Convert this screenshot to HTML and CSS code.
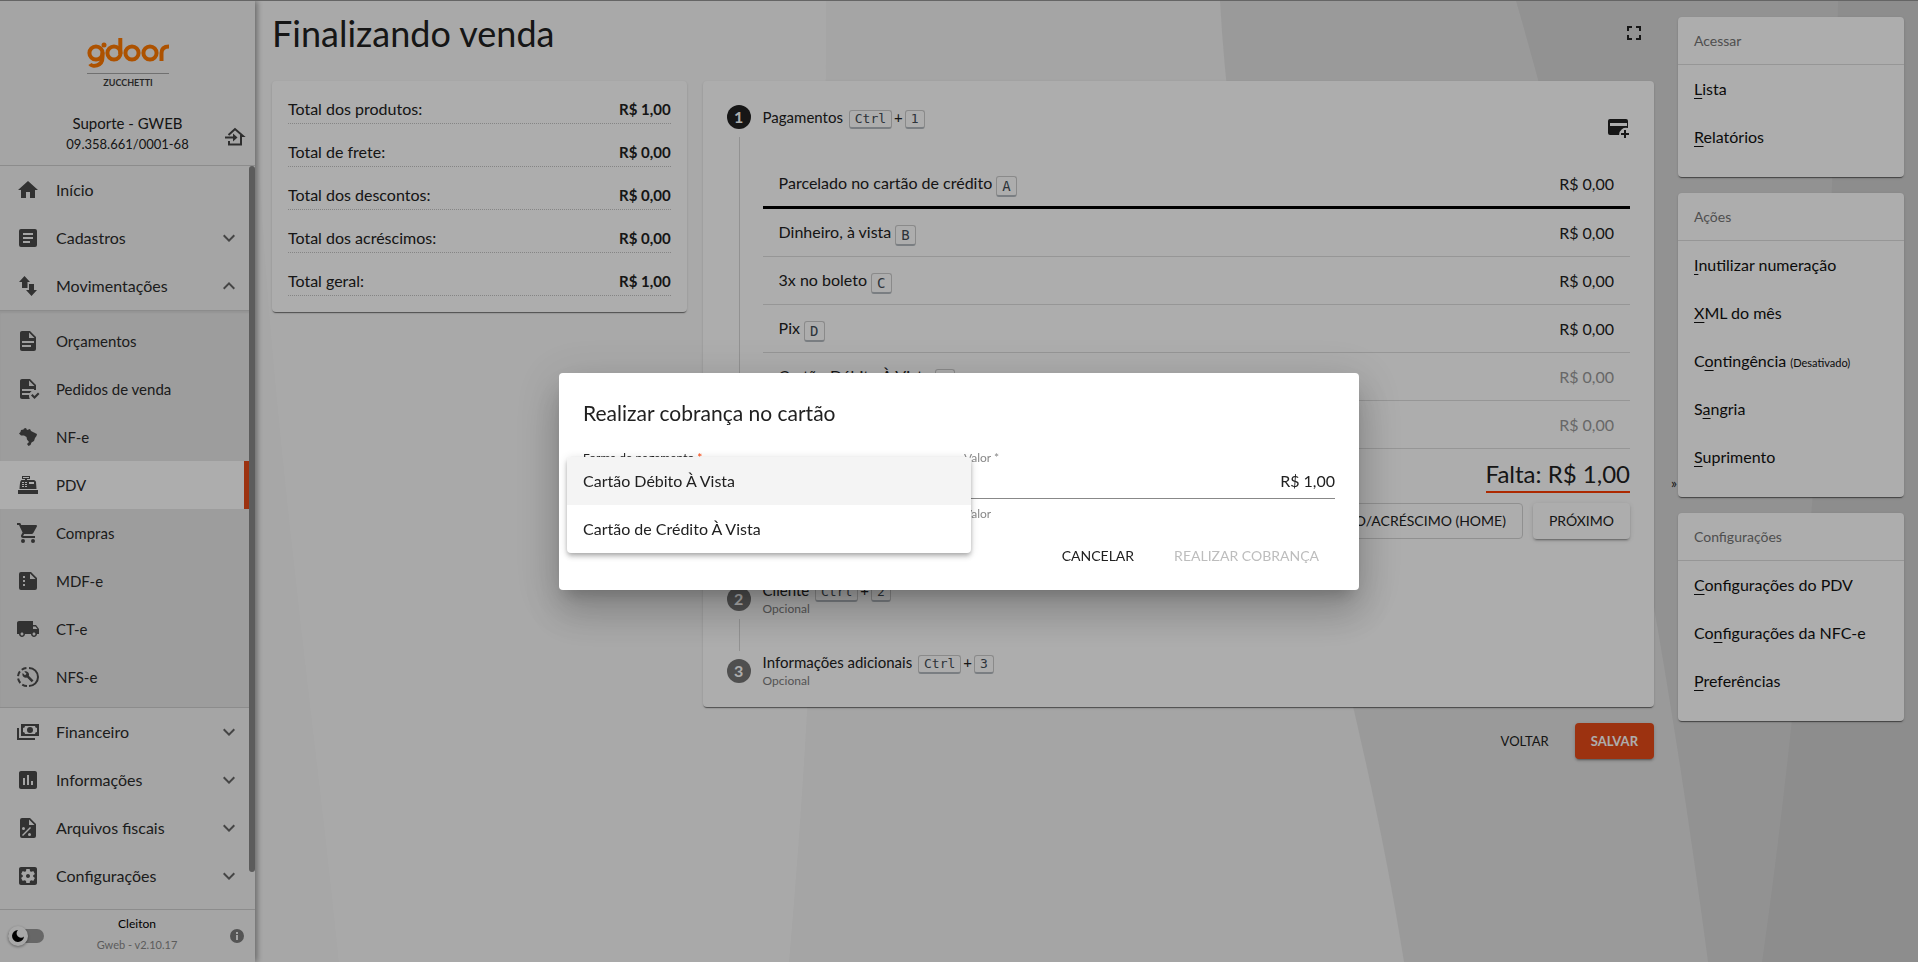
FILE: index.html
```html
<!DOCTYPE html>
<html lang="pt-BR">
<head>
<meta charset="utf-8">
<title>Finalizando venda</title>
<link rel="stylesheet" href="styles.css">
</head>
<body>
<div class="app">
  <svg class="backdrop-art" viewBox="0 0 1918 962" preserveAspectRatio="none" aria-hidden="true">
    <rect width="1918" height="962" fill="#fafafa"/>
    <path d="M256 100C268 400 315 720 339 962H256Z" fill="#f7f7f7"/>
    <path d="M826 0C826 380 812 700 789 962H1918V0Z" fill="#f3f3f3"/>
    <path d="M1220 0C1238 330 1352 630 1404 962H1918V0Z" fill="#e4e4e4"/>
    <path d="M1516 0C1600 290 1660 600 1708 962H1918V0Z" fill="#d8d8d8"/>
    <path d="M1838 0C1832 300 1805 660 1762 962H1918V0Z" fill="#d0d0d0"/>
  </svg>

  <aside class="sidebar">
    <header class="brand">
      <svg class="logo" viewBox="0 0 82 50" role="img" aria-label="gdoor Zucchetti">
        <g fill="none" stroke="#ff7900" stroke-width="4">
          <circle cx="9" cy="16" r="6.600"/><path d="M15.500 15.500V20C15.500 30 5 30 3 27"/>
          <circle cx="27" cy="16" r="6.600"/><path d="M33.300 1V17"/>
          <circle cx="45" cy="16" r="6.600"/><circle cx="63" cy="16" r="6.600"/>
          <path d="M74.500 24V16C74.500 11.500 77 9.500 82 9.500"/>
        </g>
        <circle cx="17" cy="8" r="2.500" fill="#ff7900"/>
        <path d="M0 36.500H82" stroke="#a5a5a5"/>
        <text class="logo-sub" x="41" y="49" text-anchor="middle">ZUCCHETTI</text>
      </svg>
      <div class="company">
        <strong class="company-name">Suporte - GWEB</strong>
        <span class="company-id">09.358.661/0001-68</span>
      </div>
      <button class="icon-btn leave" aria-label="Trocar empresa">
        <svg class="icon" viewBox="0 0 24 24"><path d="M5.500 10 12 4 20 11H18V19.500H6V16" fill="none" stroke="currentColor" stroke-width="2"/><path d="M2 13.500V11.500H10V8.500L14.500 12.500 10 16.500V13.500Z"/></svg>
      </button>
    </header>

    <nav class="menu">
      <a class="item" href="#"><svg class="icon" viewBox="0 0 24 24"><path d="M10,20V14H14V20H19V12H22L12,3L2,12H5V20H10Z"/></svg><span>Início</span></a>
      <a class="item" href="#"><svg class="icon" viewBox="0 0 24 24"><path fill-rule="evenodd" d="M19,3H5A2,2 0 0,0 3,5V19A2,2 0 0,0 5,21H19A2,2 0 0,0 21,19V5A2,2 0 0,0 19,3M14,17H7V15H14V17M17,13H7V11H17V13M17,9H7V7H17V9Z"/></svg><span>Cadastros</span><svg class="icon chev" viewBox="0 0 24 24"><path d="M7.410,8.580L12,13.170L16.590,8.580L18,10L12,16L6,10Z"/></svg></a>
      <a class="item" href="#"><svg class="icon" viewBox="0 0 24 24"><path d="M8.500 2 14 8H11.500V14H6V8H3ZM13 10H18V16H21L15.500 22 10 16H13Z"/></svg><span>Movimentações</span><svg class="icon chev up" viewBox="0 0 24 24"><path d="M7.410,8.580L12,13.170L16.590,8.580L18,10L12,16L6,10Z"/></svg></a>
      <div class="submenu">
        <a class="item" href="#"><svg class="icon" viewBox="0 0 24 24"><path d="M13,9H18.500L13,3.500V9M6,2H14L20,8V20A2,2 0 0,1 18,22H6C4.890,22 4,21.100 4,20V4C4,2.890 4.890,2 6,2M15,18V16H6V18H15M18,14V12H6V14H18Z"/></svg><span>Orçamentos</span></a>
        <a class="item" href="#"><svg class="icon" viewBox="0 0 24 24"><path d="M23.500 17L18.500 22L15 18.500L16.500 17L18.500 19L22 15.500L23.500 17M6 2C4.890 2 4 2.890 4 4V20C4 21.110 4.890 22 6 22H13.810C13.280 21.090 13 20.050 13 19C13 18.670 13.030 18.330 13.080 18H6V16H13.810C14.270 15.200 14.910 14.500 15.680 14H6V12H18V13.080C18.330 13.030 18.670 13 19 13S19.670 13.030 20 13.080V8L14 2M13 3.500L18.500 9H13Z"/></svg><span>Pedidos de venda</span></a>
        <a class="item" href="#"><svg class="icon" viewBox="0 0 24 24"><path d="M5 5 7.500 4.500 8 3.500 10 3 11 5 14 4 15 6 18 7.500 21 9 20.500 11 19 13 18 16 15.500 17.500 14.500 20 12.500 21 11 19 13 17 11 14.500 10.500 12 8 10.500 5 10.500 3 8.500 4.500 7Z"/></svg><span>NF-e</span></a>
        <a class="item active" href="#"><svg class="icon" viewBox="0 0 24 24"><path d="M2,17H22V21H2V17M6.250,7H9V6H6V3H14V6H11V7H17.800C18.800,7 19.800,8 20,9L20.500,16H3.500C4.050,9 4.170,7 6.250,7M13,9V11H18V9H13M6,9V10H8V9H6M9,9V10H11V9H9M6,11V12H8V11H6M9,11V12H11V11H9M6,13V14H8V13H6M9,13V14H11V13H9M7,4V5H13V4H7Z"/></svg><span>PDV</span></a>
        <a class="item" href="#"><svg class="icon" viewBox="0 0 24 24"><path d="M17,18A2,2 0 1,1 17,22A2,2 0 1,1 17,18M1,2H4.270L5.210,4H20A1,1 0 0,1 21,5C21,5.170 20.950,5.340 20.880,5.500L17.300,11.970C16.960,12.580 16.300,13 15.550,13H8.100L7.200,14.630L7.170,14.750A0.250,0.250 0 0,0 7.420,15H19V17H7C5.890,17 5,16.100 5,15C5,14.650 5.090,14.320 5.240,14.040L6.600,11.590L3,4H1V2M7,18A2,2 0 1,1 7,22A2,2 0 1,1 7,18Z"/></svg><span>Compras</span></a>
        <a class="item" href="#"><svg class="icon" viewBox="0 0 24 24"><path fill-rule="evenodd" d="M15 3H5A2 2 0 0 0 3 5V19A2 2 0 0 0 5 21H19A2 2 0 0 0 21 19V9ZM7 7H9V9H7ZM7 11H9V13H7ZM7 15H9V17H7ZM14 4.500 19.500 10H14Z"/></svg><span>MDF-e</span></a>
        <a class="item" href="#"><svg class="icon" viewBox="0 0 24 24"><path d="M20 8h-3V4H3c-1.100 0-2 .9-2 2v11h2c0 1.660 1.340 3 3 3s3-1.340 3-3h6c0 1.660 1.340 3 3 3s3-1.340 3-3h2v-5l-3-4zM6 18.500c-.83 0-1.500-.67-1.500-1.500s.67-1.500 1.500-1.500 1.500.67 1.500 1.500-.67 1.500-1.500 1.500zm13.500-9l1.960 2.500H17V9.500h2.500zm-1.500 9c-.83 0-1.500-.67-1.500-1.500s.67-1.500 1.500-1.500 1.500.67 1.500 1.500-.67 1.500-1.500 1.500z"/></svg><span>CT-e</span></a>
        <a class="item" href="#"><svg class="icon" viewBox="0 0 24 24"><path d="M13 3A9 9 0 0 1 13 21" fill="none" stroke="currentColor" stroke-width="2"/><path d="M11 21A9 9 0 0 1 11 3" fill="none" stroke="currentColor" stroke-width="2" stroke-dasharray="5 2.500"/><path d="M17.500 15.500 12.800 10.800C13.300 9.600 13 8.200 12 7.200 11 6.200 9.500 6 8.300 6.500L10.500 8.700 9 10.200 6.700 8C6.100 9.300 6.400 10.800 7.400 11.800 8.400 12.700 9.800 13 11 12.500L15.700 17.300Z"/></svg><span>NFS-e</span></a>
      </div>
      <a class="item" href="#"><svg class="icon" viewBox="0 0 24 24"><path fill-rule="evenodd" d="M5,4H23V16H5V4M9,6A2,2 0 0,1 7,8V12A2,2 0 0,1 9,14H19A2,2 0 0,1 21,12V8A2,2 0 0,1 19,6H9M14,7A3,3 0 1,1 14,13A3,3 0 1,1 14,7M1,8H3V18H19V20H1V8Z"/></svg><span>Financeiro</span><svg class="icon chev" viewBox="0 0 24 24"><path d="M7.410,8.580L12,13.170L16.590,8.580L18,10L12,16L6,10Z"/></svg></a>
      <a class="item" href="#"><svg class="icon" viewBox="0 0 24 24"><path d="M19 3H5c-1.100 0-2 .9-2 2v14c0 1.100.9 2 2 2h14c1.100 0 2-.9 2-2V5c0-1.100-.9-2-2-2zM9 17H7v-7h2v7zm4 0h-2V7h2v10zm4 0h-2v-4h2v4z"/></svg><span>Informações</span><svg class="icon chev" viewBox="0 0 24 24"><path d="M7.410,8.580L12,13.170L16.590,8.580L18,10L12,16L6,10Z"/></svg></a>
      <a class="item" href="#"><svg class="icon" viewBox="0 0 24 24"><path fill-rule="evenodd" d="M14,2L20,8V20A2,2 0 0,1 18,22H6A2,2 0 0,1 4,20V4A2,2 0 0,1 6,2ZM13 3.500V9H18.500ZM7.500 11A1.500 1.500 0 1 0 7.500 14 1.500 1.500 0 1 0 7.500 11M13.500 17A1.500 1.500 0 1 0 13.500 20 1.500 1.500 0 1 0 13.500 17M14 11 6 19 7 20 15 12Z"/></svg><span>Arquivos fiscais</span><svg class="icon chev" viewBox="0 0 24 24"><path d="M7.410,8.580L12,13.170L16.590,8.580L18,10L12,16L6,10Z"/></svg></a>
      <a class="item" href="#"><svg class="icon" viewBox="0 0 24 24"><path d="M12 10c-1.100 0-2 .9-2 2s.9 2 2 2 2-.9 2-2-.9-2-2-2zm7-7H5c-1.110 0-2 .9-2 2v14c0 1.100.89 2 2 2h14c1.110 0 2-.9 2-2V5c0-1.100-.89-2-2-2zm-1.750 9c0 .23-.02.46-.05.68l1.480 1.160c.13.11.17.3.08.45l-1.400 2.420c-.09.15-.27.21-.43.15l-1.740-.7c-.36.28-.76.51-1.180.69l-.26 1.850c-.03.17-.18.3-.35.3h-2.800c-.17 0-.32-.13-.35-.29l-.26-1.850c-.43-.18-.82-.41-1.180-.69l-1.740.7c-.16.06-.34 0-.43-.15l-1.400-2.420c-.09-.15-.05-.34.08-.45l1.480-1.160c-.03-.23-.05-.46-.05-.69 0-.23.02-.46.05-.68l-1.480-1.160c-.13-.11-.17-.3-.08-.45l1.400-2.420c.09-.15.27-.21.43-.15l1.740.7c.36-.28.76-.51 1.180-.69l.26-1.850c.03-.17.18-.3.35-.3h2.800c.17 0 .32.13.35.29l.26 1.850c.43.18.82.41 1.180.69l1.740-.7c.16-.06.34 0 .43.15l1.400 2.420c.09.15.05.34-.08.45l-1.480 1.160c.03.23.05.46.05.69z"/></svg><span>Configurações</span><svg class="icon chev" viewBox="0 0 24 24"><path d="M7.410,8.580L12,13.170L16.590,8.580L18,10L12,16L6,10Z"/></svg></a>
      <span class="scroll-thumb"></span>
    </nav>

    <footer class="side-foot">
      <button class="theme" role="switch" aria-checked="false" aria-label="Tema escuro"><span class="knob"><svg viewBox="0 0 14 14"><path d="M7 1A6 6 0 1 0 13 7.500 4 4 0 0 1 7 1Z"/></svg></span></button>
      <div class="who"><span class="user">Cleiton</span><span class="version">Gweb - v2.10.17</span></div>
      <svg class="info" viewBox="0 0 14 14" role="img" aria-label="Informações"><path fill-rule="evenodd" d="M7 0A7 7 0 1 0 7 14 7 7 0 1 0 7 0M6 3H8V5H6ZM6 6H8V11H6Z"/></svg>
    </footer>
  </aside>

  <main class="main">
    <div class="title-row">
      <h1>Finalizando venda</h1>
      <button class="icon-btn" aria-label="Tela cheia"><svg class="icon" viewBox="0 0 24 24"><path d="M5,5H10V7H7V10H5V5M14,5H19V10H17V7H14V5M17,14H19V19H14V17H17V14M10,17V19H5V14H7V17H10Z"/></svg></button>
    </div>
    <div class="columns">
      <dl class="card totals">
        <div class="total"><dt>Total dos produtos:</dt><dd>R$ 1,00</dd></div>
        <div class="total"><dt>Total de frete:</dt><dd>R$ 0,00</dd></div>
        <div class="total"><dt>Total dos descontos:</dt><dd>R$ 0,00</dd></div>
        <div class="total"><dt>Total dos acréscimos:</dt><dd>R$ 0,00</dd></div>
        <div class="total"><dt>Total geral:</dt><dd>R$ 1,00</dd></div>
      </dl>
      <div class="checkout">
        <section class="card steps">
          <div class="step">
            <div class="step-head first">
              <span class="num current">1</span>
              <div class="step-label">Pagamentos <kbd>Ctrl</kbd>+<kbd>1</kbd></div>
              <button class="icon-btn" aria-label="Adicionar pagamento"><svg class="icon" viewBox="0 0 24 24"><path fill-rule="evenodd" d="M4 4H20A2 2 0 0 1 22 6V13.100A7 7 0 0 0 13.100 20H4A2 2 0 0 1 2 18V6A2 2 0 0 1 4 4ZM4 8V11H21V8ZM18 15H20V18H23V20H20V23H18V20H15V18H18Z"/></svg></button>
            </div>
            <div class="step-body">
              <ul class="payments">
                <li class="focused"><span>Parcelado no cartão de crédito <kbd>A</kbd></span><span class="amount">R$ 0,00</span></li>
                <li><span>Dinheiro, à vista <kbd>B</kbd></span><span class="amount">R$ 0,00</span></li>
                <li><span>3x no boleto <kbd>C</kbd></span><span class="amount">R$ 0,00</span></li>
                <li><span>Pix <kbd>D</kbd></span><span class="amount">R$ 0,00</span></li>
                <li><span>Cartão Débito À Vista <kbd>E</kbd></span><span class="amount off">R$ 0,00</span></li>
                <li><span>Cartão de Crédito À Vista <kbd>F</kbd></span><span class="amount off">R$ 0,00</span></li>
              </ul>
              <p class="missing"><span>Falta: R$ 1,00</span></p>
              <div class="step-actions">
                <button class="btn outlined">DESCONTO/ACRÉSCIMO (HOME)</button>
                <button class="btn raised">PRÓXIMO</button>
              </div>
            </div>
          </div>
          <div class="step">
            <div class="step-head">
              <span class="num">2</span>
              <div class="step-label">Cliente <kbd>Ctrl</kbd>+<kbd>2</kbd><small>Opcional</small></div>
            </div>
          </div>
          <div class="step">
            <div class="step-head">
              <span class="num">3</span>
              <div class="step-label">Informações adicionais <kbd>Ctrl</kbd>+<kbd>3</kbd><small>Opcional</small></div>
            </div>
          </div>
        </section>
        <div class="page-actions">
          <button class="btn">VOLTAR</button>
          <button class="btn primary">SALVAR</button>
        </div>
      </div>
    </div>
  </main>

  <aside class="side-panel">
    <button class="collapse" aria-label="Recolher painel">»</button>
    <section class="card group">
      <h2>Acessar</h2>
      <a href="#"><u>L</u>ista</a>
      <a href="#"><u>R</u>elatórios</a>
    </section>
    <section class="card group">
      <h2>Ações</h2>
      <a href="#"><u>I</u>nutilizar numeração</a>
      <a href="#"><u>X</u>ML do mês</a>
      <a href="#">C<u>o</u>ntingência <small>(Desativado)</small></a>
      <a href="#">S<u>a</u>ngria</a>
      <a href="#"><u>S</u>uprimento</a>
    </section>
    <section class="card group">
      <h2>Configurações</h2>
      <a href="#"><u>C</u>onfigurações do PDV</a>
      <a href="#">Co<u>n</u>figurações da NFC-e</a>
      <a href="#"><u>P</u>referências</a>
    </section>
  </aside>
</div>

<div class="overlay">
  <form class="dialog" role="dialog" aria-labelledby="dlg-title">
    <h2 id="dlg-title">Realizar cobrança no cartão</h2>
    <div class="fields">
      <div class="field">
        <label for="method">Forma de pagamento <span class="req">*</span></label>
        <select id="method"><option></option><option>Cartão Débito À Vista</option><option>Cartão de Crédito À Vista</option></select>
        <ul class="options" role="listbox" aria-label="Forma de pagamento">
          <li class="hover" role="option">Cartão Débito À Vista</li>
          <li role="option">Cartão de Crédito À Vista</li>
        </ul>
      </div>
      <div class="field muted">
        <label for="value">Valor *</label>
        <input id="value" type="text" value="R$ 1,00">
        <span class="hint">Valor</span>
      </div>
    </div>
    <div class="dialog-actions">
      <button type="button" class="btn">CANCELAR</button>
      <button type="button" class="btn" disabled>REALIZAR COBRANÇA</button>
    </div>
  </form>
</div>
</body>
</html>
```
FILE: styles.css
```css
* { box-sizing: border-box; }

body {
  margin: 0;
  font-family: Lato, "Open Sans", sans-serif;
  font-size: 16px;
  line-height: 24px;
  color: #212121;
}

h1, h2, p, ul, dl, dd { margin: 0; padding: 0; font-weight: 400; }
ul { list-style: none; }
a { color: inherit; text-decoration: none; }
button, input, select { font: inherit; color: inherit; }

.app {
  position: relative;
  display: flex;
  height: 100vh;
  overflow: hidden;
  border-top: 1px solid #969696;
}

.backdrop-art {
  position: absolute;
  inset: 0;
  z-index: -1;
  width: 100%;
  height: 100%;
}

.icon {
  flex: none;
  display: block;
  width: 24px;
  height: 24px;
  fill: currentColor;
}

.icon-btn {
  padding: 0;
  border: 0;
  background: none;
  cursor: pointer;
}

.card {
  border-radius: 4px;
  background: #fff;
  box-shadow: 0 2px 1px -1px rgba(0, 0, 0, .4), 0 1px 1px rgba(0, 0, 0, .14), 0 1px 3px rgba(0, 0, 0, .12);
}

/* Sidebar */
.sidebar {
  flex: none;
  display: flex;
  flex-direction: column;
  width: 255px;
  background: #f4f4f4;
  box-shadow: 2px 0 6px rgba(0, 0, 0, .4);
}

.brand {
  position: relative;
  display: flex;
  flex-direction: column;
  align-items: center;
  gap: 26px;
  padding: 36px 0 10px;
  border-bottom: 1px solid #cfcfcf;
}

.logo { width: 82px; height: 50px; }
.logo-sub { font-size: 9px; font-weight: 700; fill: #3b3b3b; }

.company {
  display: flex;
  flex-direction: column;
  align-items: center;
  line-height: 21px;
}

.company-name { font-size: 15px; font-weight: 400; }
.company-id { font-size: 13px; }
.leave { position: absolute; right: 8px; bottom: 16px; color: #444; }

.menu {
  position: relative;
  flex: 1;
  min-height: 0;
}

.item {
  display: flex;
  align-items: center;
  gap: 16px;
  height: 48px;
  padding: 0 14px 0 16px;
  color: #2b2b2b;
}

.item .icon { color: #4a4a4a; }
.item .chev { margin-left: auto; color: #666; }
.up { transform: rotate(180deg); }

.submenu {
  padding: 6px 0;
  border-top: 1px solid #cfcfcf;
  border-bottom: 1px solid #cfcfcf;
  background: #e8e8e8;
  font-size: 15px;
  box-shadow: inset 0 2px 2px rgba(0, 0, 0, .06);
}

.active {
  margin-right: 6px;
  border-right: 5px solid #e64a19;
  background: #fff;
}

.scroll-thumb {
  position: absolute;
  top: 0;
  right: 0;
  width: 6px;
  height: 95%;
  border-radius: 3px;
  background: #888;
}

.side-foot {
  display: flex;
  align-items: center;
  justify-content: space-between;
  height: 53px;
  padding: 0 11px 0 8px;
  border-top: 1px solid #cfcfcf;
}

.theme {
  width: 36px;
  height: 14px;
  padding: 0;
  border: 0;
  border-radius: 7px;
  background: #999;
}

.knob {
  display: flex;
  align-items: center;
  justify-content: center;
  width: 20px;
  height: 20px;
  margin-top: -3px;
  border-radius: 50%;
  background: #f8f8f8;
  box-shadow: 0 1px 3px rgba(0, 0, 0, .4);
}

.knob svg { width: 14px; height: 14px; }

.who {
  display: flex;
  flex-direction: column;
  align-items: center;
  gap: 1px;
  padding-bottom: 4px;
  font-size: 12px;
  line-height: 20px;
}

.user { color: #000; }
.version { font-size: 11px; color: #888; }
.info { width: 14px; height: 14px; fill: #7d7d7d; }

/* Main content */
.main {
  flex: 1;
  min-width: 0;
  padding: 8px 16px 16px 17px;
}

.title-row {
  display: flex;
  align-items: center;
  justify-content: space-between;
  height: 48px;
  padding-right: 8px;
}

h1 { font-size: 36px; line-height: 48px; }

.columns {
  display: grid;
  grid-template-columns: 30% 1fr;
  align-items: start;
  gap: 16px;
  padding-top: 24px;
}

.totals {
  display: flex;
  flex-direction: column;
  gap: 16px;
  padding: 16px;
}

.total {
  display: flex;
  justify-content: space-between;
  height: 27px;
  border-bottom: 1px dotted #c4c4c4;
}

.total dd { font-size: 15px; font-weight: 700; }

.step { position: relative; }

.step:not(:last-child)::before {
  content: "";
  position: absolute;
  top: 56px;
  bottom: -16px;
  left: 36px;
  border-left: 1px solid #d8d8d8;
}

.step-head {
  display: flex;
  align-items: center;
  gap: 12px;
  height: 72px;
  padding: 0 24px;
}

.first { align-items: flex-start; padding-top: 24px; }
.first .icon-btn { padding-top: 10px; margin-left: auto; }

.num {
  flex: none;
  width: 24px;
  border-radius: 50%;
  background: #757575;
  color: #fff;
  font-weight: 700;
  text-align: center;
}

.current { background: #212121; }
.step-label { padding-bottom: 4px; font-size: 15px; }
.step-label small { display: block; font-size: 12px; line-height: 14px; color: #7c7c7c; }

kbd {
  display: inline-block;
  margin: 0 2px;
  padding: 0 5px;
  border: 1px solid #ccc;
  border-bottom: 2px solid #b4bac0;
  border-radius: 3px;
  color: #444d56;
  font: 13px/16px "DejaVu Sans Mono", monospace;
}

.payments kbd { margin: 0; font-size: 14px; line-height: 18px; vertical-align: -2px; }

.step-body { padding: 8px 24px 24px 60px; }

.payments li {
  display: flex;
  align-items: center;
  justify-content: space-between;
  height: 48px;
  padding: 0 16px;
  border-bottom: 1px solid #ddd;
}

.payments .focused { border-bottom: 3px solid #000; }
.off { color: #999; }

.missing {
  display: flex;
  justify-content: flex-end;
  padding-top: 8px;
  font-size: 24px;
  line-height: 34px;
}

.missing span { border-bottom: 2px solid #ff3d00; }

.step-actions {
  display: flex;
  justify-content: flex-end;
  gap: 10px;
  padding-top: 10px;
}

.btn {
  height: 36px;
  padding: 0 16px;
  border: 0;
  border-radius: 4px;
  background: none;
  font-size: 14px;
  cursor: pointer;
}

.outlined { border: 1px solid #d5d5d5; }

.raised, .primary {
  background: #fff;
  box-shadow: 0 3px 1px -2px rgba(0, 0, 0, .2), 0 2px 2px rgba(0, 0, 0, .14), 0 1px 5px rgba(0, 0, 0, .12);
}

.primary { background: #e64a19; color: #fff; font-weight: 700; }
.btn:disabled { color: #bdbdbd; }

.page-actions {
  display: flex;
  justify-content: flex-end;
  gap: 10px;
  padding-top: 16px;
}

.page-actions .btn { font-size: 13px; }

/* Right panel */
.side-panel {
  position: relative;
  flex: none;
  display: flex;
  flex-direction: column;
  gap: 16px;
  width: 248px;
  padding: 16px 14px 16px 8px;
}

.collapse {
  position: absolute;
  top: 470px;
  left: 1px;
  padding: 0;
  border: 0;
  background: none;
  font-size: 14px;
}

.group { padding-bottom: 16px; }

.group h2 {
  padding: 0 16px;
  border-bottom: 1px solid #ddd;
  font-size: 14px;
  line-height: 47px;
  color: #757575;
}

.group a { display: block; height: 48px; padding: 0 16px; line-height: 48px; color: #111; }
.group small { font-size: 11px; }
.group u { text-underline-offset: 3px; }

/* Dialog */
.overlay {
  position: fixed;
  inset: 0;
  display: flex;
  align-items: center;
  justify-content: center;
  background: rgba(0, 0, 0, .32);
}

.dialog {
  width: 800px;
  padding: 24px 24px 16px;
  border-radius: 4px;
  background: #fff;
  box-shadow: 0 11px 15px -7px rgba(0, 0, 0, .2), 0 24px 38px 3px rgba(0, 0, 0, .14), 0 9px 46px 8px rgba(0, 0, 0, .12);
}

.dialog h2 { font-size: 21px; line-height: 32px; }

.fields {
  display: grid;
  grid-template-columns: 1fr 1fr;
  gap: 10px;
  padding-top: 20px;
}

.field {
  position: relative;
  display: flex;
  flex-direction: column;
  font-size: 12px;
}

.field label { line-height: 18px; }
.muted { color: #888; }
.req { color: #ff3d00; }

.field input, .field select {
  height: 32px;
  padding: 0 0 4px;
  border: 0;
  border-bottom: 1px solid #888;
  border-radius: 0;
  background: none;
  color: #212121;
  font-size: 16px;
  line-height: 24px;
  outline: 0;
}

.field input { text-align: right; }
.hint { line-height: 30px; }

.options {
  position: absolute;
  top: 8px;
  left: -16px;
  right: 0;
  z-index: 1;
  margin-right: -17px;
  border-radius: 4px;
  background: #fff;
  overflow: hidden;
  font-size: 16px;
  box-shadow: 0 2px 4px -1px rgba(0, 0, 0, .2), 0 4px 5px rgba(0, 0, 0, .14), 0 1px 10px rgba(0, 0, 0, .12);
}

.options li { padding: 0 16px; line-height: 48px; color: #212121; }
.options .hover { background: #f4f4f4; }

.dialog-actions {
  display: flex;
  justify-content: flex-end;
  gap: 8px;
  padding-top: 9px;
}
```
